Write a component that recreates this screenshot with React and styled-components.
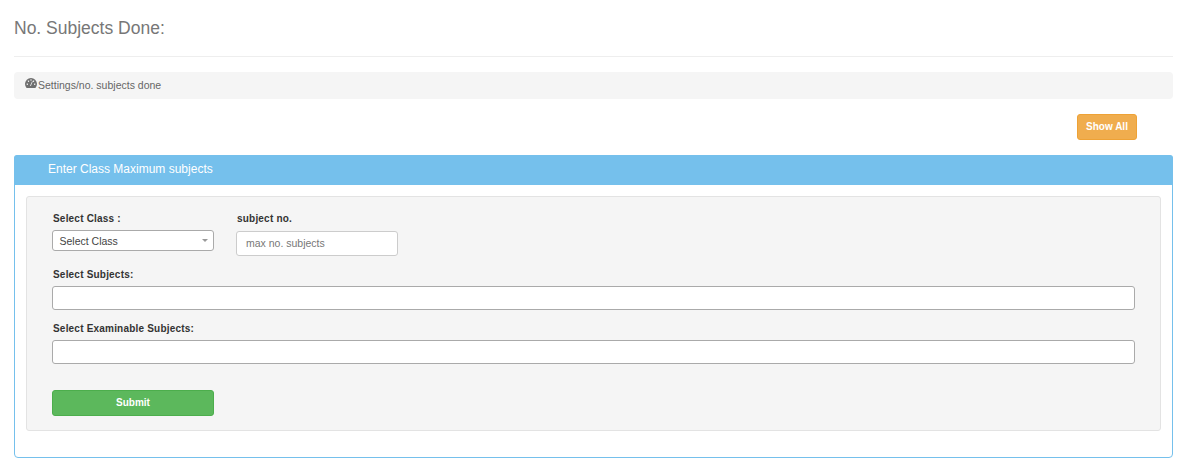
import React from "react";
import styled, { createGlobalStyle } from "styled-components";

const GlobalStyle = createGlobalStyle`
  * { box-sizing: border-box; }
  body {
    margin: 0;
    background: #fff;
    font-family: "Liberation Sans", Arial, sans-serif;
    color: #333;
  }
`;

const Page = styled.div`
  width: 1182px;
  height: 475px;
  overflow: hidden;
  padding: 0 9px 0 14px;
`;

const Title = styled.h3`
  margin: 0;
  height: 57px;
  padding-top: 18px;
  font-size: 17.5px;
  line-height: 20px;
  font-weight: 400;
  color: #777;
  border-bottom: 1px solid #eee;
`;

const Breadcrumb = styled.div`
  margin-top: 15px;
  height: 27px;
  padding: 0 11px 2px;
  display: flex;
  align-items: center;
  gap: 1px;
  background: #f5f5f5;
  border-radius: 4px;
  font-size: 10.5px;
  color: #666;
`;

const CrumbIcon = styled.svg`
  width: 12px;
  height: 12px;
  flex: none;
  margin-top: -4px;
`;

const Actions = styled.div`
  margin-top: 15px;
  padding-right: 36px;
  display: flex;
  justify-content: flex-end;
`;

const Button = styled.button`
  height: 26px;
  border-radius: 3px;
  border: 1px solid ${(p) => p.$border};
  background: ${(p) => p.$bg};
  color: #fff;
  font-family: inherit;
  font-size: 10px;
  font-weight: 700;
  padding: 0 0 2px;
  width: ${(p) => p.$width}px;
`;

const Panel = styled.section`
  margin-top: 15px;
  height: 303px;
  border: 1px solid #75c0ec;
  border-radius: 4px;
`;

const PanelHeading = styled.div`
  height: 30px;
  margin: -1px -1px 0;
  padding-left: 34px;
  background: #75c0ec;
  border-radius: 3px 3px 0 0;
  color: #fff;
  font-size: 12px;
  line-height: 28px;
`;

const Well = styled.div`
  margin: 11px 11px 0;
  height: 235px;
  padding: 16px 25px 0;
  background: #f5f5f5;
  border: 1px solid #e3e3e3;
  border-radius: 3px;
`;

const Row = styled.div`
  display: flex;
  gap: 22px;
`;

const Field = styled.div`
  width: ${(p) => p.$width || "100%"};
  margin-top: ${(p) => p.$top || 0}px;
`;

const Label = styled.div`
  height: 17px;
  padding-left: 1px;
  font-size: 10px;
  line-height: 12px;
  font-weight: 700;
  color: #333;
  letter-spacing: 0.2px;
`;

const SelectBox = styled.div`
  position: relative;
  height: 21px;
  padding-left: 6.5px;
  background: #fff;
  border: 1px solid #aaa;
  border-radius: 3px;
  font-size: 10.5px;
  line-height: 20px;
  color: #444;
`;

const Caret = styled.span`
  position: absolute;
  right: 5px;
  top: 8px;
  border-style: solid;
  border-width: 3px 3px 0;
  border-color: #999 transparent transparent;
`;

const TextInput = styled.input`
  display: block;
  width: 100%;
  height: ${(p) => p.$height}px;
  margin-top: ${(p) => p.$top || 0}px;
  padding: 0 9px 2px;
  background: #fff;
  border: 1px solid ${(p) => p.$border};
  border-radius: 3px;
  font-family: inherit;
  font-size: 10.5px;
  outline: none;
  &::placeholder { color: #777; opacity: 1; }
`;

const SubmitRow = styled.div`
  margin-top: 26px;
`;

const GaugeIcon = () => (
  <CrumbIcon viewBox="0 0 12 12" aria-hidden="true">
    <path
      fillRule="evenodd"
      fill="#6f6f6f"
      d="M1.6 11 A6 6 0 1 1 10.4 11 Z
         M2.3 6.4 a.7 .7 0 1 0 .01 0 Z
         M3.5 3.4 a.7 .7 0 1 0 .01 0 Z
         M6 2.2 a.7 .7 0 1 0 .01 0 Z
         M8.5 3.4 a.7 .7 0 1 0 .01 0 Z
         M9.7 6.4 a.7 .7 0 1 0 .01 0 Z"
    />
    <path d="M5.4 9 L7.4 4.4" stroke="#f5f5f5" strokeWidth=".8" />
  </CrumbIcon>
);

export default function App() {
  return (
    <Page>
      <GlobalStyle />
      <Title>No. Subjects Done:</Title>
      <Breadcrumb>
        <GaugeIcon />
        Settings/no. subjects done
      </Breadcrumb>
      <Actions>
        <Button $bg="#f0ad4e" $border="#eea236" $width={60}>Show All</Button>
      </Actions>
      <Panel>
        <PanelHeading>Enter Class Maximum subjects</PanelHeading>
        <Well>
          <Row>
            <Field $width="162px">
              <Label>Select Class :</Label>
              <SelectBox>
                Select Class
                <Caret />
              </SelectBox>
            </Field>
            <Field $width="162px">
              <Label>subject no.</Label>
              <TextInput $height={25} $top={1} $border="#ccc" placeholder="max no. subjects" />
            </Field>
          </Row>
          <Field $top={13}>
            <Label>Select Subjects:</Label>
            <TextInput $height={24} $border="#aaa" />
          </Field>
          <Field $top={13}>
            <Label>Select Examinable Subjects:</Label>
            <TextInput $height={24} $border="#aaa" />
          </Field>
          <SubmitRow>
            <Button $bg="#5cb85c" $border="#4cae4c" $width={162}>Submit</Button>
          </SubmitRow>
        </Well>
      </Panel>
    </Page>
  );
}
